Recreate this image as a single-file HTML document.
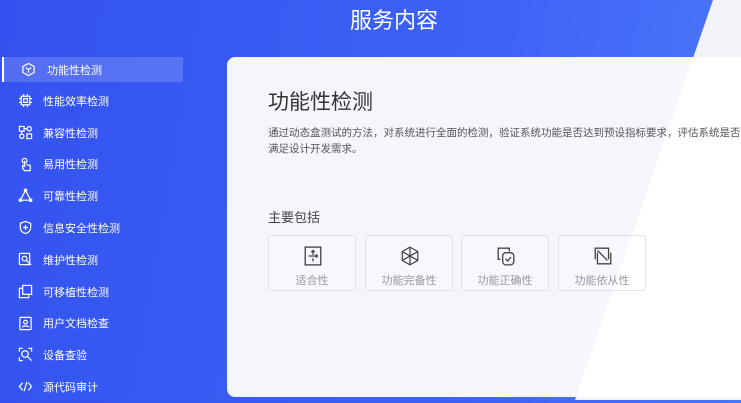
<!DOCTYPE html><html><head><meta charset="utf-8"><style>
*{margin:0;padding:0;box-sizing:border-box}
body{width:741px;height:400px;overflow:hidden;position:relative;font-family:"Liberation Sans","Noto Sans CJK SC",sans-serif;background:linear-gradient(100deg,#3452ef 0%,#3d62f6 60%,#4a7af8 100%)}
.diag{position:absolute;inset:0;background:#f3f4fa;clip-path:polygon(713px 0,741px 0,741px 400px,575px 400px)}
.h{position:absolute;top:3px;left:0;width:788px;text-align:center;color:#fff;font-size:22px}
.panel{position:absolute;left:227px;top:57px;width:530px;height:340px;border-radius:8px;background:#f4f6fc;overflow:hidden}
.panel .w{position:absolute;inset:0;background:#fff;clip-path:polygon(466px 0,600px 0,600px 340px,349px 340px)}
.nav{position:absolute;left:2px;top:57px;width:181px}
.it{height:31.8px;display:flex;align-items:center;color:#fff;font-size:11px;position:relative}
.it svg{position:absolute;left:16px;top:8px}
.it span{position:absolute;left:41px}
.act{background:rgba(255,255,255,.16);height:25px;border-left:2px solid #fff;margin-bottom:3px}
.act span{left:43px}
.act svg{left:17px;top:5px}
.t{position:absolute;left:268px;top:86px;font-size:21px;color:#333}
.d{position:absolute;left:268px;top:125px;width:480px;font-size:10.5px;line-height:16px;color:#555}
.s{position:absolute;left:268px;top:207px;font-size:13px;color:#444}
.c{position:absolute;top:235px;width:88px;height:56px;border:1px solid #dfe2ea;border-radius:3px;text-align:center;font-size:11px;color:#999;background:rgba(255,255,255,.25)}
.c svg{position:absolute;left:34px;top:10px}
.c span{position:absolute;left:0;right:0;top:36px}
</style></head><body>
<div class="diag"></div>
<div class="h">服务内容</div>
<div class="panel"><div class="w"></div></div>
<div class="nav">
<div class="it act"><svg width="15" height="15" viewBox="0 0 16 16" fill="none" stroke="#fff" stroke-width="1.3"><path d="M8 1.5l6 3.3v6.4L8 14.5 2 11.2V4.8z"/><path d="M5 6l3 2 3-2M8 8v3.5"/></svg><span>功能性检测</span></div>
<div class="it"><svg width="15" height="15" viewBox="0 0 16 16" fill="none" stroke="#fff" stroke-width="1.3"><rect x="3.5" y="3.5" width="9" height="9"/><rect x="6" y="6" width="4" height="4"/><path d="M1 6h2.5M1 10h2.5M12.5 6H15M12.5 10H15M6 1v2.5M10 1v2.5M6 12.5V15M10 12.5V15"/></svg><span>性能效率检测</span></div>
<div class="it"><svg width="15" height="15" viewBox="0 0 16 16" fill="none" stroke="#fff" stroke-width="1.3"><rect x="1.5" y="1.5" width="5" height="5"/><circle cx="12" cy="4" r="2.3"/><circle cx="4" cy="12" r="2.3"/><rect x="9.5" y="9.5" width="5" height="5"/><path d="M6.5 4h3M4 6.5v3"/></svg><span>兼容性检测</span></div>
<div class="it"><svg width="15" height="15" viewBox="0 0 16 16" fill="none" stroke="#fff" stroke-width="1.3"><circle cx="7" cy="4" r="2.5"/><path d="M7 4v6l-2-1v3l2 2.5h6V9l-4-1"/></svg><span>易用性检测</span></div>
<div class="it"><svg width="15" height="15" viewBox="0 0 16 16" fill="none" stroke="#fff" stroke-width="1.3"><path d="M8 2.5L2.5 13h11z"/><circle cx="8" cy="2.5" r="1.3"/><circle cx="2.5" cy="13" r="1.3"/><circle cx="13.5" cy="13" r="1.3"/></svg><span>可靠性检测</span></div>
<div class="it"><svg width="15" height="15" viewBox="0 0 16 16" fill="none" stroke="#fff" stroke-width="1.3"><path d="M8 1.5l5.5 2v4.5c0 3.5-2.5 5.5-5.5 6.5C5 13.5 2.5 11.5 2.5 8V3.5z"/><path d="M8 5.5v5M5.5 8h5"/></svg><span>信息安全性检测</span></div>
<div class="it"><svg width="15" height="15" viewBox="0 0 16 16" fill="none" stroke="#fff" stroke-width="1.3"><rect x="1.5" y="1.5" width="11" height="12" rx="1"/><circle cx="7" cy="7" r="2.5"/><path d="M9 9l5 5"/></svg><span>维护性检测</span></div>
<div class="it"><svg width="15" height="15" viewBox="0 0 16 16" fill="none" stroke="#fff" stroke-width="1.3"><rect x="5" y="1.5" width="9.5" height="9.5"/><path d="M5 4.5H1.5v10h10V11"/></svg><span>可移植性检测</span></div>
<div class="it"><svg width="15" height="15" viewBox="0 0 16 16" fill="none" stroke="#fff" stroke-width="1.3"><rect x="2" y="1.5" width="12" height="13" rx="1"/><circle cx="8" cy="6.5" r="2"/><path d="M4.5 12c1-2 6-2 7 0"/></svg><span>用户文档检查</span></div>
<div class="it"><svg width="15" height="15" viewBox="0 0 16 16" fill="none" stroke="#fff" stroke-width="1.3"><path d="M1.5 5V1.5H5M11 1.5h3.5V5M1.5 11v3.5H5"/><circle cx="7.5" cy="7.5" r="3.5"/><path d="M10 10l4.5 4.5"/></svg><span>设备查验</span></div>
<div class="it"><svg width="15" height="15" viewBox="0 0 16 16" fill="none" stroke="#fff" stroke-width="1.3"><path d="M5 4L1.5 8 5 12M11 4l3.5 4-3.5 4M9.5 3l-3 10"/></svg><span>源代码审计</span></div>
</div>
<div class="t">功能性检测</div>
<div class="d">通过动态盒测试的方法，对系统进行全面的检测，验证系统功能是否达到预设指标要求，评估系统是否满足设计开发需求。</div>
<div class="s">主要包括</div>
<div class="c" style="left:268px"><svg width="20" height="20" viewBox="0 0 16 18" fill="none" stroke="#444" stroke-width="1.2"><rect x="1" y="1" width="14" height="16"/><path d="M8 4v4M6.5 5.5L8 4l1.5 1.5M8 11v3M4 9h8M10.5 7.5L12 9l-1.5 1.5"/></svg><span>适合性</span></div>
<div class="c" style="left:365px"><svg width="20" height="20" viewBox="0 0 18 18" fill="none" stroke="#444" stroke-width="1.1"><path d="M9 1l7 4v8l-7 4-7-4V5z"/><path d="M9 1v16M2 5l14 8M16 5L2 13"/></svg><span>功能完备性</span></div>
<div class="c" style="left:461px"><svg width="20" height="20" viewBox="0 0 18 18" fill="none" stroke="#444" stroke-width="1.2"><path d="M4 12H2V2h10v3"/><rect x="6" y="6" width="10" height="11" rx="3"/><path d="M8.5 11.5l2 2 3-3.5"/></svg><span>功能正确性</span></div>
<div class="c" style="left:558px"><svg width="20" height="20" viewBox="0 0 18 18" fill="none" stroke="#444" stroke-width="1.2"><path d="M14 12V2H2v10"/><path d="M4 6v10h12V6"/><path d="M4 4l9 9"/></svg><span>功能依从性</span></div>
</body></html>
